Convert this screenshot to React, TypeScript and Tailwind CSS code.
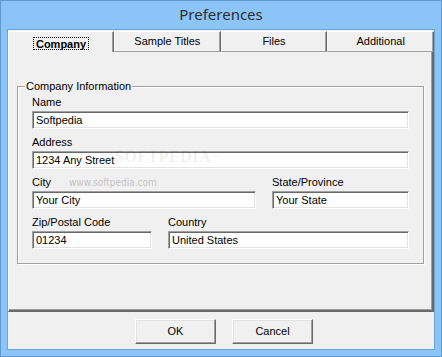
import React from "react";

function Field({ label, value }: { label: string; value: string }) {
  return (
    <div className="flex flex-col">
      <div className="h-[13px] leading-[13px] mb-[2px] text-black whitespace-nowrap">{label}</div>
      <div className="h-[18px] bg-white border-t border-l border-t-[#a0a0a0] border-l-[#a0a0a0] border-b border-r border-b-white border-r-white shadow-[inset_1px_1px_0_#696969,inset_-1px_-1px_0_#e3e3e3] flex items-center pl-[3px] pt-[1px] text-black whitespace-nowrap overflow-hidden">
        {value}
      </div>
    </div>
  );
}

function Tab({ label, selected }: { label: string; selected?: boolean }) {
  if (selected) {
    return (
      <div className="w-[106px] h-[21px] bg-[#f0f0f0] border-l border-t border-l-white border-t-white border-r border-r-[#696969] shadow-[inset_-1px_0_0_#a0a0a0] flex items-center justify-center relative z-10 pt-[2px]">
        <span className="font-bold text-black border border-dotted border-black px-[2px] h-[13px] leading-[11px] pt-[1px]">{label}</span>
      </div>
    );
  }
  return (
    <div className="w-[106px] flex-1 h-[21px] bg-[#f0f0f0] border-t border-t-white border-l border-l-[#f8f8f8] border-r border-r-[#696969] shadow-[inset_-1px_0_0_#a0a0a0] border-b border-b-[#a0a0a0] flex items-center justify-center text-black pb-[1px]">
      {label}
    </div>
  );
}

export default function App() {
  return (
    <div className="relative w-[442px] h-[357px] bg-[#8bc5f7] border border-[#5f9bd2] flex flex-col font-['Liberation_Sans',Arial,sans-serif] text-[11px] overflow-hidden">
      <div className="h-[28px] flex items-center justify-center text-[15px] text-[#2d2d2d] font-['Noto_Sans',sans-serif] pb-[1px]">
        Preferences
      </div>
      <div className="mx-[6px] mb-[6px] flex-1 border border-[#6aa3d8] bg-[#f0f0f0] flex flex-col">
        <div className="pt-[1px] flex flex-col">
          <div className="flex">
            <Tab label="Company" selected />
            <Tab label="Sample Titles" />
            <Tab label="Files" />
            <Tab label="Additional" />
          </div>
          <div className="h-[260px] border-l border-l-white border-r-2 border-r-[#696969] border-b-2 border-b-[#696969] shadow-[inset_-1px_-1px_0_#a0a0a0] px-[8px] pt-[34px]">
            <div className="relative h-[178px] border border-[#a0a0a0] shadow-[inset_1px_1px_0_#fff,1px_1px_0_#fff] pt-[9px] px-[14px]">
              <div className="absolute left-[7px] -top-[7px] px-[1px] bg-[#f0f0f0] leading-[13px] text-black">
                Company Information
              </div>
              <div className="flex flex-col gap-[7px]">
                <Field label="Name" value="Softpedia" />
                <Field label="Address" value="1234 Any Street" />
                <div className="grid grid-cols-[224px_1fr] gap-x-[16px]">
                  <Field label="City" value="Your City" />
                  <Field label="State/Province" value="Your State" />
                </div>
                <div className="grid grid-cols-[120px_1fr] gap-x-[16px]">
                  <Field label="Zip/Postal Code" value="01234" />
                  <Field label="Country" value="United States" />
                </div>
              </div>
            </div>
          </div>
        </div>
        <div className="flex-1 flex justify-center gap-[16px] pt-[7px] pl-[6px]">
          <button className="w-[81px] h-[25px] bg-[#f0f0f0] border-t border-l border-t-white border-l-white border-b border-r border-b-[#696969] border-r-[#696969] shadow-[inset_-1px_-1px_0_#a0a0a0,inset_1px_1px_0_#e3e3e3] text-black text-[11px]">
            OK
          </button>
          <button className="w-[81px] h-[25px] bg-[#f0f0f0] border-t border-l border-t-white border-l-white border-b border-r border-b-[#696969] border-r-[#696969] shadow-[inset_-1px_-1px_0_#a0a0a0,inset_1px_1px_0_#e3e3e3] text-black text-[11px]">
            Cancel
          </button>
        </div>
      </div>
      <div className="absolute left-[114px] top-[147px] text-[16px] font-bold tracking-[0.5px] text-black/[0.07] font-['Liberation_Serif',serif] pointer-events-none select-none leading-[18px]">
        SOFTPEDIA<span className="text-[7px] align-top">™</span>
      </div>
      <div className="absolute left-[68px] top-[176px] text-[10px] text-[#c4c4c4] font-['DejaVu_Sans_Condensed',sans-serif] pointer-events-none select-none leading-[12px]">
        www.softpedia.com
      </div>
    </div>
  );
}
